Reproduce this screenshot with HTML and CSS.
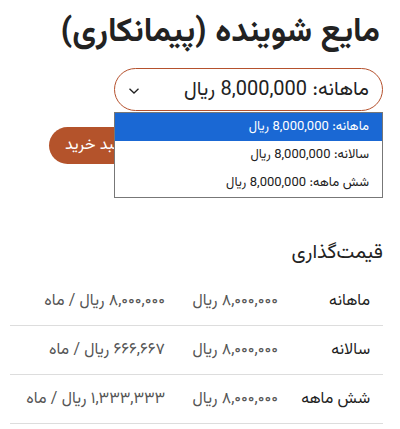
FILE: index.html
```html
<!DOCTYPE html>
<html lang="fa" dir="rtl">
<head>
<meta charset="utf-8">
<link rel="stylesheet" href="styles.css">
</head>
<body>
<main class="page">
  <h1 class="title">مایع شوینده (پیمانکاری)</h1>
  <div class="picker">
    <div class="select">
      <span class="select-text">ماهانه: 8,000,000 ریال</span>
      <svg class="chev" width="12" height="8" viewBox="0 0 12 8"><path d="M1.5 1.8 L6 6 L10.5 1.8" fill="none" stroke="#222" stroke-width="1.3"/></svg>
    </div>
    <ul class="options">
      <li class="opt active">ماهانه: 8,000,000 ریال</li>
      <li class="opt">سالانه: 8,000,000 ریال</li>
      <li class="opt">شش ماهه: 8,000,000 ریال</li>
    </ul>
  </div>
  <div class="actions">
    <div class="qty"></div>
    <button class="buy">افزودن به سبد خرید</button>
  </div>
  <p class="note">برای خرید ابتدا <a class="link">وارد شوید</a> یا ثبت نام کنید</p>
  <h2 class="sub">قیمت‌گذاری</h2>
  <table class="prices">
    <tr><td class="c1">ماهانه</td><td class="c2">۸,۰۰۰,۰۰۰ ریال</td><td class="c3">۸,۰۰۰,۰۰۰ ریال / ماه</td></tr>
    <tr><td class="c1">سالانه</td><td class="c2">۸,۰۰۰,۰۰۰ ریال</td><td class="c3">۶۶۶,۶۶۷ ریال / ماه</td></tr>
    <tr><td class="c1">شش ماهه</td><td class="c2">۸,۰۰۰,۰۰۰ ریال</td><td class="c3">۱,۳۳۳,۳۳۳ ریال / ماه</td></tr>
  </table>
</main>
</body>
</html>
```
FILE: styles.css
```css
html, body { margin: 0; padding: 0; background: #fff; }
body { font-family: Vazirmatn, Vazir, Tahoma, sans-serif; color: #222; }
.page { padding: 10px 17px 0 10px; }
.title { margin: 0; font-size: 33px; font-weight: 700; line-height: 46px; padding-right: 3px; }
.picker { position: relative; margin-top: 12px; width: 269px; }
.select { height: 41px; border: 1px solid #b5512d; border-radius: 22px; display: flex; align-items: center; justify-content: space-between; padding: 0 13px 0 16px; font-size: 20px; }
.select-text { line-height: 1; }
.chev { margin-top: 2px; margin-left: -3px; }
.options { position: absolute; top: 44px; right: 0; width: 267px; margin: 0; padding: 0; list-style: none; background: #fff; border: 1px solid #777; z-index: 2; }
.opt { height: 28px; line-height: 28px; font-size: 13px; padding: 0 13px; color: #222; }
.opt.active { background: #1a68d4; color: #fff; }
.actions { display: flex; gap: 10px; margin-top: 16px; }
.qty { width: 140px; height: 37px; }
.buy { width: 184px; height: 37px; border: 0; border-radius: 19px; background: #b4532b; color: #fff; font-family: inherit; font-size: 16px; padding: 0 16px; text-align: left; }
.note { margin: 14px 0 0; font-size: 14px; color: #444; text-align: center; padding-left: 60px; }
.link { color: #b4532b; }
.sub { margin: 38px 0 0; font-size: 20px; font-weight: 400; line-height: 30px; }
.prices { width: 100%; border-collapse: collapse; margin-top: 9px; font-size: 16px; }
.prices td { height: 48px; border-bottom: 1px solid #ddd; padding: 0; }
.c1 { color: #222; width: 92px; padding-right: 13px !important; }
.c2 { color: #555; width: 113px; }
.c3 { color: #555; }
```
